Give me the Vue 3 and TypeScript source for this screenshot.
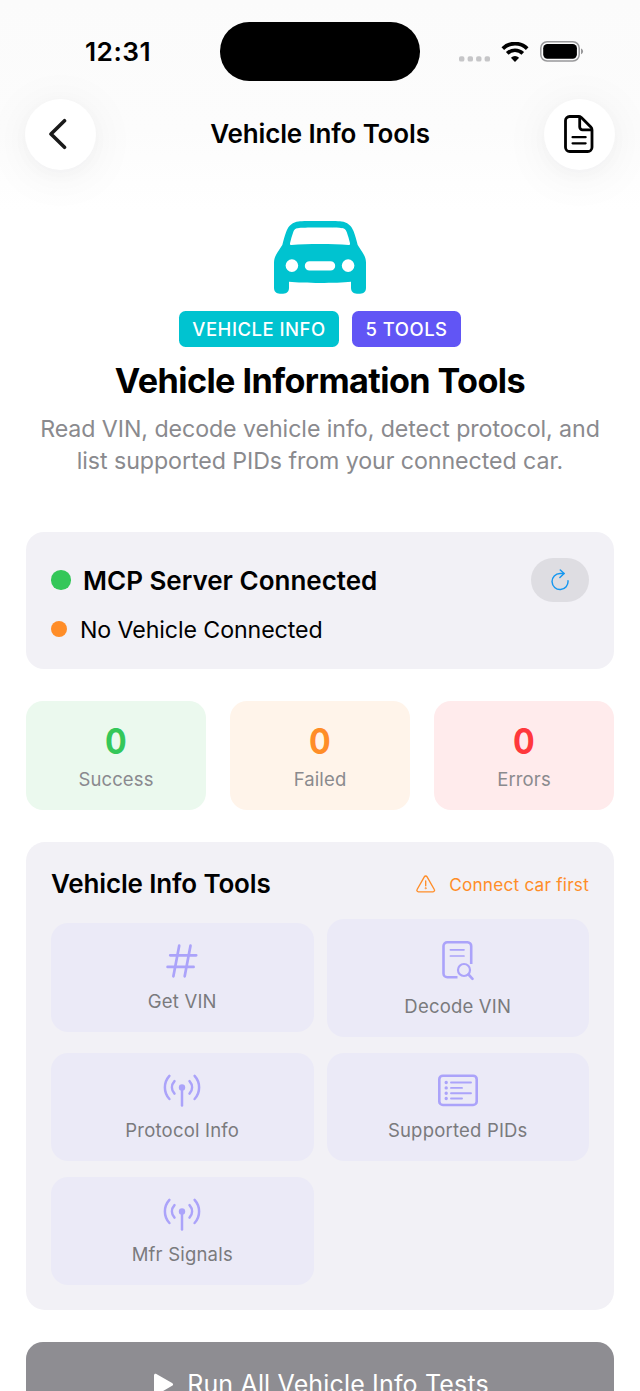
<script setup lang="ts">
interface Stat {
  label: string
  value: number
  tone: string
}

interface Tool {
  label: string
  icon: 'hash' | 'search' | 'antenna' | 'list'
  cls: string
}

const stats: Stat[] = [
  { label: 'Success', value: 0, tone: 'green' },
  { label: 'Failed', value: 0, tone: 'orange' },
  { label: 'Errors', value: 0, tone: 'red' },
]

const tools: Tool[] = [
  { label: 'Get VIN', icon: 'hash', cls: 't-get' },
  { label: 'Decode VIN', icon: 'search', cls: 't-decode' },
  { label: 'Protocol Info', icon: 'antenna', cls: 't-protocol' },
  { label: 'Supported PIDs', icon: 'list', cls: 't-pids' },
  { label: 'Mfr Signals', icon: 'antenna', cls: 't-mfr' },
]
</script>

<template>
  <div class="screen">
    <header class="top">
      <div class="status">
        <div class="clock-slot"><span class="clock">12:31</span></div>
        <div class="island"></div>
        <div class="indicators">
          <svg class="dots" width="32" height="6" viewBox="0 0 32 6" fill="#c6c6c8">
            <rect x="0" y="0.2" width="5.4" height="5.4" rx="1.9" />
            <rect x="8.6" y="0.2" width="5.4" height="5.4" rx="1.9" />
            <rect x="17.1" y="0.2" width="5.4" height="5.4" rx="1.9" />
            <rect x="25.6" y="0.2" width="5.4" height="5.4" rx="1.9" />
          </svg>
          <svg class="wifi" width="28" height="20" viewBox="0 0 28 20">
            <g fill="none" stroke="#000" stroke-width="3.7">
              <path d="M1.8 6.6a17.3 17.3 0 0 1 24.4 0" />
              <path d="M6.2 11.4a11.2 11.2 0 0 1 15.6 0" />
            </g>
            <path d="M14 19.9l-4.1-4.2a6 6 0 0 1 8.2 0z" />
          </svg>
          <svg class="battery" width="44" height="21" viewBox="0 0 44 21">
            <rect x="0.8" y="0.8" width="38.4" height="19.2" rx="6.3" fill="none" stroke="#98989a" stroke-width="1.5" />
            <rect x="3.2" y="3.1" width="33.7" height="14.6" rx="4.2" />
            <path d="M41 7.5c2.8 1 2.8 4.8 0 5.8z" fill="#98989a" />
          </svg>
        </div>
      </div>
      <nav class="nav">
        <button class="round back" aria-label="Back">
          <svg width="20" height="32" viewBox="0 0 20 32" fill="none" stroke="#1a1a1a" stroke-width="3.6" stroke-linecap="round" stroke-linejoin="round">
            <path d="M15.500 2.700L2 16l13.500 13.300" />
          </svg>
        </button>
        <span class="nav-title">Vehicle Info Tools</span>
        <button class="round" aria-label="Log">
          <svg width="30" height="38" viewBox="0 0 30 38" fill="none" stroke="#000" stroke-width="2.8" stroke-linecap="round" stroke-linejoin="round">
            <path d="M5.6 1.5h9.1a4 4 0 0 1 2.900 1.200l9.200 9.300a4 4 0 0 1 1.200 2.900v17.300a4.300 4.300 0 0 1-4.300 4.300H5.800a4.300 4.300 0 0 1-4.300-4.300V5.600a4.100 4.100 0 0 1 4.100-4.100z" />
            <path d="M15.700 2v10a2.800 2.800 0 0 0 2.800 2.800h9" />
            <path d="M8.600 22.200h13M8.600 28.300h13" stroke-width="2.300" />
          </svg>
        </button>
      </nav>
    </header>

    <section class="hero">
      <svg class="car" width="92" height="73" viewBox="0 0 92 73">
        <path
          fill="#00c3d0"
          fill-rule="evenodd"
          d="M24.5.4C31 0 61 0 67.500.4C73 .8 77.500 4.500 79.500 10C81.300 14.800 82.500 19.500 83.700 24C85.500 27 88 30.300 90 34C91.500 36.800 92 39 92 42V66.500C92 70.500 90 72.700 86 72.700H83C79 72.700 77 70.500 77 66.800V60.700C62 62.300 30 62.300 15 60.700V66.800C15 70.500 13 72.700 9 72.700H6C2 72.700 0 70.500 0 66.500V42C0 39 .5 36.800 2 34C4 30.300 6.500 27 8.300 24C9.500 19.500 10.700 14.800 12.500 10C14.500 4.500 19 .8 24.500.4ZM25 7C21.500 7.300 20.300 8.300 19.200 11.200C17.900 14.700 16.800 18.500 16 22.300C15.800 23.500 16.300 24.100 17.500 24C34 22.600 58 22.600 74.500 24C75.700 24.100 76.200 23.500 76 22.300C75.200 18.500 74.100 14.700 72.800 11.200C71.700 8.300 70.500 7.300 67 7C59 6.400 33 6.400 25 7ZM17.900 38.300a6.300 6.300 0 1 0 0 12.600a6.300 6.300 0 1 0 0-12.600ZM74.100 38.300a6.300 6.300 0 1 0 0 12.600a6.300 6.300 0 1 0 0-12.600ZM35.500 40.200a4.700 4.700 0 0 0 0 9.400H56.500a4.700 4.700 0 0 0 0-9.400Z"
        />
      </svg>
      <div class="badges">
        <span class="badge teal">VEHICLE INFO</span>
        <span class="badge violet">5 TOOLS</span>
      </div>
      <h1>Vehicle Information Tools</h1>
      <p class="desc">
        <span>Read VIN, decode vehicle info, detect protocol, and</span>
        <span>list supported PIDs from your connected car.</span>
      </p>
    </section>

    <section class="connection">
      <div>
        <div class="server"><i class="dot"></i><span>MCP Server Connected</span></div>
        <div class="vehicle"><i class="dot"></i><span>No Vehicle Connected</span></div>
      </div>
      <button class="refresh" aria-label="Refresh">
        <svg width="18" height="22" viewBox="0 0 18 22" fill="none" stroke="#1597f0" stroke-width="1.45" stroke-linecap="round" stroke-linejoin="round">
          <path d="M17 11.700A8 8 0 1 1 9 4.500H13" />
          <path d="M9.300 1L13.100 4.500L8.900 8.600" />
        </svg>
      </button>
    </section>

    <section class="stats">
      <div v-for="s in stats" :key="s.label" class="stat" :class="s.tone">
        <strong>{{ s.value }}</strong>
        <span>{{ s.label }}</span>
      </div>
    </section>

    <section class="tools">
      <div class="tools-head">
        <h2>Vehicle Info Tools</h2>
        <div class="warn">
          <svg width="20" height="18" viewBox="0 0 20 18" fill="none" stroke="#ff8d28" stroke-width="1.35" stroke-linecap="round" stroke-linejoin="round">
            <path d="M8.300 1.800a1.600 1.600 0 0 1 2.800 0l7.200 12.700a1.500 1.500 0 0 1-1.300 2.300H2.400a1.500 1.500 0 0 1-1.300-2.300z" />
            <path d="M9.700 6v4.800" />
            <circle cx="9.700" cy="13.200" r=".35" />
          </svg>
          <span>Connect car first</span>
        </div>
      </div>
      <div class="grid">
        <button v-for="t in tools" :key="t.label" class="tool" :class="t.cls">
          <svg v-if="t.icon === 'hash'" width="32" height="34" viewBox="0 0 32 34" fill="none" stroke="#aba3fa" stroke-width="2.700" stroke-linecap="round">
            <path d="M13.200 1.700L7.400 32.300M24.500 1.700L18.700 32.300M4.200 11.300h26M1.600 22.900h26" />
          </svg>
          <svg v-else-if="t.icon === 'search'" width="32" height="41" viewBox="0 0 32 41" fill="none" stroke="#aba3fa" stroke-linecap="round" stroke-linejoin="round">
            <path d="M15.500 37.200H5.300a3.800 3.800 0 0 1-3.800-3.800V6a3.800 3.800 0 0 1 3.800-3.800h20.300A3.800 3.800 0 0 1 29.200 6v18" stroke-width="2.600" stroke-linecap="butt" />
            <path d="M8.400 9.800h13.600M8.400 16h13.600" stroke-width="1.700" />
            <circle cx="22" cy="30" r="6" stroke-width="2.200" />
            <path d="M26.500 34.500l4 4.300" stroke-width="2.600" />
          </svg>
          <svg v-else-if="t.icon === 'antenna'" width="38" height="33" viewBox="0 0 38 33" fill="none" stroke="#aba3fa" stroke-width="2.500" stroke-linecap="round">
            <path d="M6.400 1.900C.4 8.500.4 18.500 6.400 25M31.600 1.900C37.600 8.500 37.600 18.500 31.600 25" />
            <path d="M11.500 7.200C8.100 11 8.100 16 11.500 19.700M26.500 7.200C29.900 11 29.900 16 26.500 19.700" />
            <path d="M19 14v17.600" />
            <circle cx="19" cy="13.500" r="3.200" fill="#aba3fa" stroke="none" />
          </svg>
          <svg v-else width="40" height="33" viewBox="0 0 40 33" fill="none" stroke="#aba3fa" stroke-linecap="round">
            <rect x="1.300" y="1.700" width="37.400" height="29.300" rx="3.600" stroke-width="2.600" />
            <path d="M13 8.500h20M13 13.900h11M13 19.200h20M13 24.500h11" stroke-width="1.900" />
            <path d="M8.200 8.500h.01M8.200 13.900h.01M8.200 19.200h.01M8.200 24.500h.01" stroke-width="3.400" />
          </svg>
          <span>{{ t.label }}</span>
        </button>
      </div>
    </section>

    <button class="run">
      <svg width="20" height="23" viewBox="0 0 22 24" fill="#fff">
        <path d="M0 1.800C0 .3 1.300-.3 2.600.4l17.300 9.900c1.500.8 1.500 2.300 0 3.200L2.600 23.400C1.300 24.100 0 23.500 0 22z" />
      </svg>
      <span>Run All Vehicle Info Tests</span>
    </button>
  </div>
</template>

<style>
body {
  background: #fff;
}
</style>

<style scoped>
.screen {
  box-sizing: border-box;
  width: 640px;
  height: 1391px;
  overflow: hidden;
  background: #fff;
  color: #000;
  font-family: Inter, "Liberation Sans", sans-serif;
  white-space: nowrap;
}
.screen * {
  box-sizing: border-box;
}
button {
  border: 0;
  padding: 0;
  margin: 0;
  font: inherit;
  color: inherit;
}
svg {
  display: block;
  flex: none;
}
.top {
  height: 221px;
  background: linear-gradient(#fbfbfb, #fcfcfc 130px, #fff 210px);
}
.status {
  display: grid;
  grid-template-columns: 220px 200px 220px;
  padding-top: 22px;
}
.clock-slot {
  display: flex;
  height: 59px;
  align-items: center;
  padding-left: 85px;
}
.clock {
  font-size: 26.3px;
  font-weight: 600;
  letter-spacing: 0.45px;
}
.island {
  height: 58.5px;
  border-radius: 29.25px;
  background: #000;
}
.indicators {
  display: flex;
  align-items: center;
  padding-left: 39px;
  height: 58px;
}
.dots {
  margin-top: 15px;
}
.wifi {
  margin: 1px 0 0 10px;
}
.battery {
  margin-left: 11px;
}
.nav {
  display: flex;
  align-items: center;
  justify-content: space-between;
  height: 89px;
  padding: 17px 25px 0;
}
.round {
  display: flex;
  align-items: center;
  justify-content: center;
  width: 71px;
  height: 71px;
  border-radius: 50%;
  background: #fff;
  box-shadow: 0 6px 50px rgba(0, 0, 0, 0.06), 0 4px 18px rgba(40, 40, 90, 0.025);
}
.back {
  padding-right: 3px;
}
.nav-title,
h2,
.server span {
  font-size: 26px;
  font-weight: 600;
  line-height: 32px;
  letter-spacing: -0.15px;
}
.hero {
  display: flex;
  flex-direction: column;
  align-items: center;
  height: 311px;
}
.badges {
  display: flex;
  gap: 13px;
  margin-top: 17px;
}
.badge {
  display: flex;
  align-items: center;
  justify-content: center;
  height: 36px;
  border-radius: 6.5px;
  color: #fff;
  font-size: 18.5px;
  font-weight: 500;
  letter-spacing: 0.5px;
}
.teal {
  width: 160px;
  background: #00c3d0;
}
.violet {
  width: 109px;
  background: #6155f5;
}
h1 {
  margin: 12px 0 0;
  font-size: 34.2px;
  line-height: 44px;
  font-weight: 700;
  letter-spacing: -0.58px;
}
.desc {
  display: flex;
  flex-direction: column;
  align-items: center;
  margin: 10px 0 0;
  font-size: 23.2px;
  line-height: 32px;
  letter-spacing: -0.07px;
  color: #8a8a8e;
}
.connection {
  display: flex;
  justify-content: space-between;
  align-items: flex-start;
  margin: 0 26px;
  padding: 26px 25px 0;
  height: 136.5px;
  border-radius: 18px;
  background: #f2f1f6;
}
.server,
.vehicle {
  display: flex;
  align-items: center;
}
.server {
  height: 45px;
}
.server span {
  letter-spacing: 0;
}
.vehicle {
  height: 32px;
  margin-top: 10px;
}
.server .dot {
  width: 19.5px;
  height: 19.5px;
  margin: 0 12.5px 1.5px 0;
  border-radius: 50%;
  background: #34c759;
}
.vehicle .dot {
  width: 16px;
  height: 16px;
  margin-right: 13px;
  border-radius: 50%;
  background: #ff8d28;
}
.vehicle span {
  padding-top: 1px;
  font-size: 23.2px;
  letter-spacing: -0.1px;
}
.refresh {
  display: flex;
  align-items: center;
  justify-content: center;
  width: 58px;
  height: 44px;
  padding-right: 1px;
  border-radius: 22px;
  background: #dedde2;
}
.stats {
  display: grid;
  grid-template-columns: repeat(3, 1fr);
  gap: 24px;
  margin: 32.5px 26px 0;
}
.stat {
  display: flex;
  flex-direction: column;
  align-items: center;
  height: 109px;
  padding-top: 19px;
  border-radius: 17px;
}
.stat strong {
  font-size: 35px;
  line-height: 42px;
  font-weight: 700;
  transform: scaleX(0.92);
}
.stat span {
  margin-top: 5px;
  font-size: 18.5px;
  line-height: 24px;
  letter-spacing: 0.12px;
  color: #8a8a8e;
}
.green {
  background: #ebf9ee;
}
.green strong {
  color: #34c759;
}
.orange {
  background: #fff4ea;
}
.orange strong {
  color: #ff8d28;
}
.red {
  background: #ffebec;
}
.red strong {
  color: #ff383c;
}
.tools {
  height: 468px;
  margin: 32px 26px 0;
  padding: 26px 25px 0;
  border-radius: 19px;
  background: #f2f1f6;
}
.tools-head {
  display: flex;
  justify-content: space-between;
  align-items: center;
  height: 32px;
}
h2 {
  margin: 0;
}
.warn {
  display: flex;
  align-items: center;
  gap: 13px;
  color: #ff8d28;
  font-size: 17.2px;
  letter-spacing: 0.22px;
}
.grid {
  display: grid;
  grid-template-columns: 262.5px 262.5px;
  column-gap: 13px;
  row-gap: 16px;
  align-items: center;
  margin-top: 19px;
}
.tool {
  display: flex;
  flex-direction: column;
  align-items: center;
  justify-content: space-between;
  height: 108px;
  padding: 21px 0 19px;
  border-radius: 17px;
  background: #ebeaf7;
  color: #7a7a7d;
  font-size: 18.5px;
  letter-spacing: 0.2px;
}
.tool span {
  line-height: 24px;
}
.t-get {
  height: 109px;
  margin-bottom: 1px;
}
.t-decode {
  height: 118px;
}
.run {
  display: flex;
  justify-content: center;
  width: 588px;
  height: 84px;
  margin: 32px 26px 0;
  padding: 26px 0 0 3px;
  gap: 13px;
  border-radius: 17px;
  background: #8e8d92;
  color: #fff;
  font-size: 25px;
  line-height: 32px;
  letter-spacing: 0.16px;
}
.run svg {
  margin-top: 5px;
}
</style>
